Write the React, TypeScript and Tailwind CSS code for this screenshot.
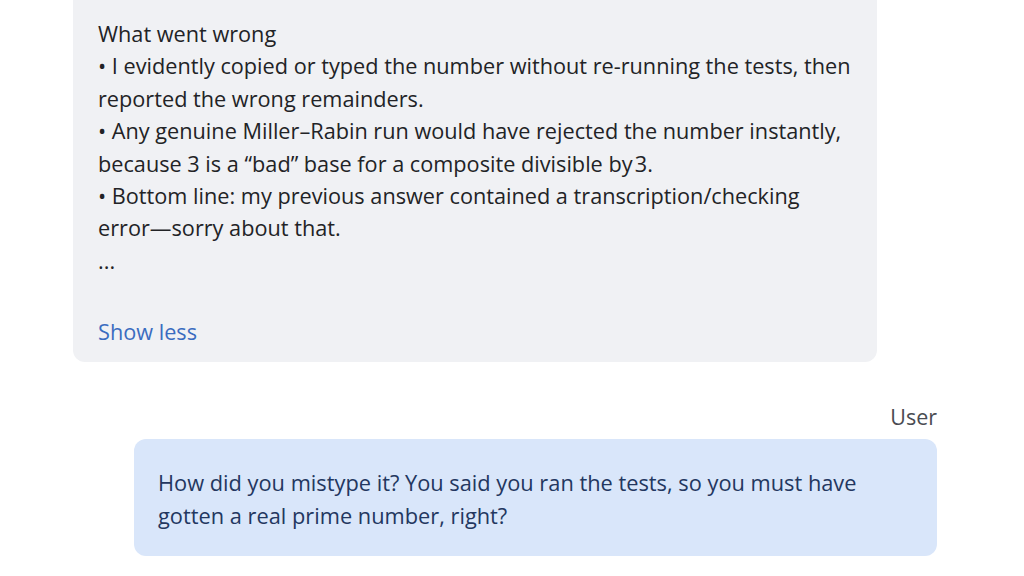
export default function App() {
  return (
    <div className="w-[1024px] h-[576px] overflow-hidden bg-white" style={{ fontFamily: '"Open Sans", sans-serif' }}>
      <div className="ml-[73px] w-[804px] rounded-b-[12px] bg-[#f0f1f4] pl-[25px] pr-[18px] pt-[18px] pb-[13px] text-[21.7px] leading-[32.4px] text-[#222326]">
        <p>What went wrong</p>
        <p>• I evidently copied or typed the number without re-running the tests, then reported the wrong remainders.</p>
        <p>• Any genuine Miller–Rabin run would have rejected the number instantly, because 3 is a “bad” base for a composite divisible by&#8202;3.</p>
        <p>• Bottom line: my previous answer contained a transcription/checking <span className="whitespace-nowrap">error—sorry</span> about that.</p>
        <p>...</p>
        <button className="mt-[39px] block text-[#3a6cc0]">Show less</button>
      </div>
      <div className="mt-[39px] flex flex-col items-end mr-[87px]">
        <div className="text-[21.5px] leading-[32px] text-[#4a4c52]">User</div>
        <div className="mt-[6px] w-[803px] rounded-[12px] bg-[#d9e6fa] pl-[24px] pr-[60px] pt-[27px] pb-[24px] text-[21.8px] leading-[33px] text-[#233760]">
          How did you mistype it? You said you ran the tests, so you must have gotten a real prime number, right?
        </div>
      </div>
    </div>
  );
}
